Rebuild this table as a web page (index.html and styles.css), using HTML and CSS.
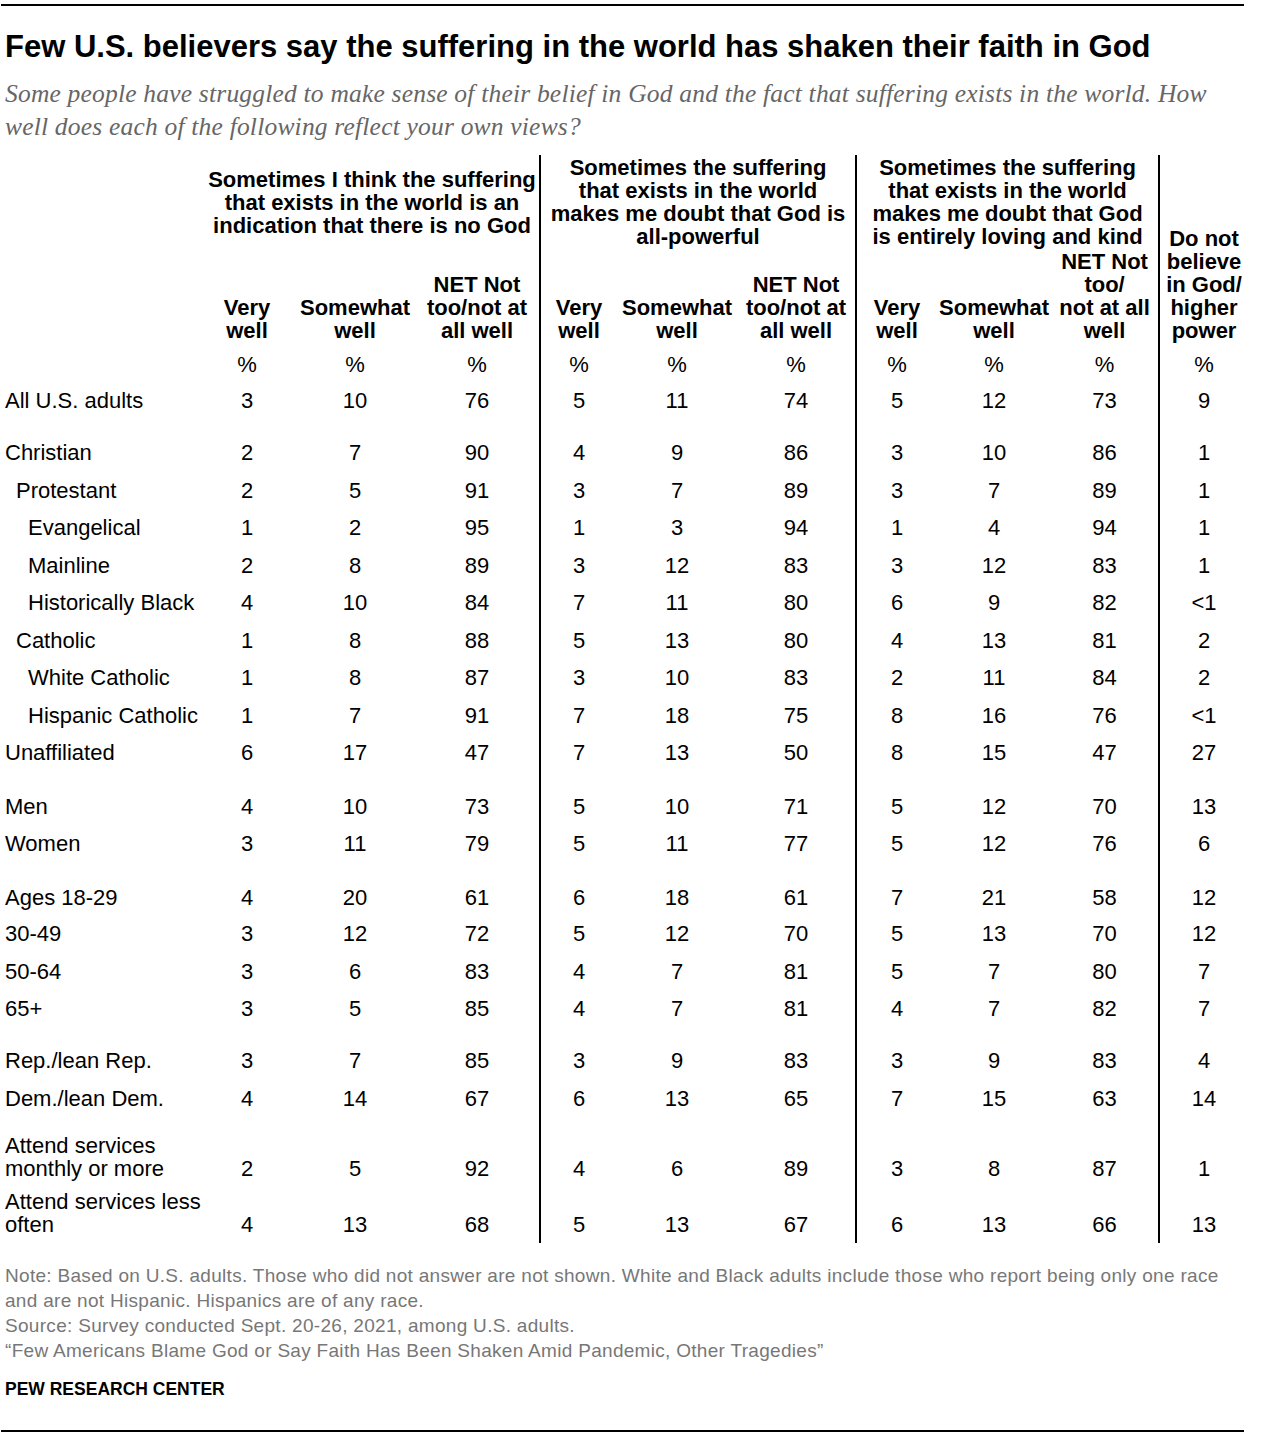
FILE: index.html
```html
<!DOCTYPE html>
<html lang="en">
<head>
<meta charset="utf-8">
<title>Few U.S. believers say the suffering in the world has shaken their faith in God</title>
<link rel="stylesheet" href="styles.css">
</head>
<body>
<div class="page">
  <div class="rule"></div>
  <h1 class="title">Few U.S. believers say the suffering in the world has shaken their faith in God</h1>
  <p class="subtitle">Some people have struggled to make sense of their belief in God and the fact that suffering exists in the world. How<br>well does each of the following reflect your own views?</p>

  <table class="data">
    <colgroup>
      <col class="w-label"><col class="w1"><col class="w2"><col class="w3">
      <col class="w4"><col class="w5"><col class="w6">
      <col class="w7"><col class="w8"><col class="w9">
      <col class="w10">
    </colgroup>
    <thead>
      <tr class="grp">
        <th></th>
        <th colspan="3" class="gh">Sometimes I think the suffering<br>that exists in the world is an<br>indication that there is no God</th>
        <th colspan="3" class="gh div">Sometimes the suffering<br>that exists in the world<br>makes me doubt that God is<br>all-powerful</th>
        <th colspan="3" class="gh div">Sometimes the suffering<br>that exists in the world<br>makes me doubt that God<br>is entirely loving and kind</th>
        <th rowspan="2" class="sh div last">Do not<br>believe<br>in God/<br>higher<br>power</th>
      </tr>
      <tr class="sub">
        <th></th>
        <th class="sh">Very<br>well</th>
        <th class="sh">Somewhat<br>well</th>
        <th class="sh c3">NET Not<br>too/not at<br>all well</th>
        <th class="sh div">Very<br>well</th>
        <th class="sh">Somewhat<br>well</th>
        <th class="sh">NET Not<br>too/not at<br>all well</th>
        <th class="sh div">Very<br>well</th>
        <th class="sh">Somewhat<br>well</th>
        <th class="sh">NET Not<br>too/<br>not at all<br>well</th>
      </tr>
      <tr class="pct">
        <td></td>
        <td>%</td><td>%</td><td class="c3">%</td>
        <td class="div">%</td><td>%</td><td>%</td>
        <td class="div">%</td><td>%</td><td>%</td>
        <td class="div">%</td>
      </tr>
    </thead>
    <tbody>
      <tr><td class="lbl">All U.S. adults</td><td>3</td><td>10</td><td class="c3">76</td><td class="div">5</td><td>11</td><td>74</td><td class="div">5</td><td>12</td><td>73</td><td class="div">9</td></tr>
      <tr class="gs"><td class="lbl">Christian</td><td>2</td><td>7</td><td class="c3">90</td><td class="div">4</td><td>9</td><td>86</td><td class="div">3</td><td>10</td><td>86</td><td class="div">1</td></tr>
      <tr><td class="lbl i1">Protestant</td><td>2</td><td>5</td><td class="c3">91</td><td class="div">3</td><td>7</td><td>89</td><td class="div">3</td><td>7</td><td>89</td><td class="div">1</td></tr>
      <tr><td class="lbl i2">Evangelical</td><td>1</td><td>2</td><td class="c3">95</td><td class="div">1</td><td>3</td><td>94</td><td class="div">1</td><td>4</td><td>94</td><td class="div">1</td></tr>
      <tr><td class="lbl i2">Mainline</td><td>2</td><td>8</td><td class="c3">89</td><td class="div">3</td><td>12</td><td>83</td><td class="div">3</td><td>12</td><td>83</td><td class="div">1</td></tr>
      <tr><td class="lbl i2">Historically Black</td><td>4</td><td>10</td><td class="c3">84</td><td class="div">7</td><td>11</td><td>80</td><td class="div">6</td><td>9</td><td>82</td><td class="div">&lt;1</td></tr>
      <tr><td class="lbl i1">Catholic</td><td>1</td><td>8</td><td class="c3">88</td><td class="div">5</td><td>13</td><td>80</td><td class="div">4</td><td>13</td><td>81</td><td class="div">2</td></tr>
      <tr><td class="lbl i2">White Catholic</td><td>1</td><td>8</td><td class="c3">87</td><td class="div">3</td><td>10</td><td>83</td><td class="div">2</td><td>11</td><td>84</td><td class="div">2</td></tr>
      <tr><td class="lbl i2">Hispanic Catholic</td><td>1</td><td>7</td><td class="c3">91</td><td class="div">7</td><td>18</td><td>75</td><td class="div">8</td><td>16</td><td>76</td><td class="div">&lt;1</td></tr>
      <tr><td class="lbl">Unaffiliated</td><td>6</td><td>17</td><td class="c3">47</td><td class="div">7</td><td>13</td><td>50</td><td class="div">8</td><td>15</td><td>47</td><td class="div">27</td></tr>
      <tr class="gs2"><td class="lbl">Men</td><td>4</td><td>10</td><td class="c3">73</td><td class="div">5</td><td>10</td><td>71</td><td class="div">5</td><td>12</td><td>70</td><td class="div">13</td></tr>
      <tr class="tight"><td class="lbl">Women</td><td>3</td><td>11</td><td class="c3">79</td><td class="div">5</td><td>11</td><td>77</td><td class="div">5</td><td>12</td><td>76</td><td class="div">6</td></tr>
      <tr class="gs2"><td class="lbl">Ages 18-29</td><td>4</td><td>20</td><td class="c3">61</td><td class="div">6</td><td>18</td><td>61</td><td class="div">7</td><td>21</td><td>58</td><td class="div">12</td></tr>
      <tr class="tight"><td class="lbl">30-49</td><td>3</td><td>12</td><td class="c3">72</td><td class="div">5</td><td>12</td><td>70</td><td class="div">5</td><td>13</td><td>70</td><td class="div">12</td></tr>
      <tr><td class="lbl">50-64</td><td>3</td><td>6</td><td class="c3">83</td><td class="div">4</td><td>7</td><td>81</td><td class="div">5</td><td>7</td><td>80</td><td class="div">7</td></tr>
      <tr><td class="lbl">65+</td><td>3</td><td>5</td><td class="c3">85</td><td class="div">4</td><td>7</td><td>81</td><td class="div">4</td><td>7</td><td>82</td><td class="div">7</td></tr>
      <tr class="gs"><td class="lbl">Rep./lean Rep.</td><td>3</td><td>7</td><td class="c3">85</td><td class="div">3</td><td>9</td><td>83</td><td class="div">3</td><td>9</td><td>83</td><td class="div">4</td></tr>
      <tr><td class="lbl">Dem./lean Dem.</td><td>4</td><td>14</td><td class="c3">67</td><td class="div">6</td><td>13</td><td>65</td><td class="div">7</td><td>15</td><td>63</td><td class="div">14</td></tr>
      <tr class="two first2"><td class="lbl">Attend services<br>monthly or more</td><td>2</td><td>5</td><td class="c3">92</td><td class="div">4</td><td>6</td><td>89</td><td class="div">3</td><td>8</td><td>87</td><td class="div">1</td></tr>
      <tr class="two last2"><td class="lbl">Attend services less<br>often</td><td>4</td><td>13</td><td class="c3">68</td><td class="div">5</td><td>13</td><td>67</td><td class="div">6</td><td>13</td><td>66</td><td class="div">13</td></tr>
    </tbody>
  </table>

  <div class="notes">
    <p>Note: Based on U.S. adults. Those who did not answer are not shown. White and Black adults include those who report being only one race<br>and are not Hispanic. Hispanics are of any race.</p>
    <p>Source: Survey conducted Sept. 20-26, 2021, among U.S. adults.</p>
    <p>“Few Americans Blame God or Say Faith Has Been Shaken Amid Pandemic, Other Tragedies”</p>
  </div>
  <div class="brand">PEW RESEARCH CENTER</div>
  <div class="rule bottom"></div>
</div>
</body>
</html>
```

FILE: styles.css
```css
html, body {
  margin: 0;
  padding: 0;
  background: #fff;
}
.page {
  width: 1244px;
  padding: 4px 0 0 0;
  font-family: "Liberation Sans", Arial, sans-serif;
  color: #000;
}
.rule {
  height: 2px;
  background: #000;
  margin-left: 1px;
}
.title {
  margin: 23px 0 0 5px;
  font-size: 31px;
  line-height: 36px;
  font-weight: bold;
  letter-spacing: 0;
  white-space: nowrap;
}
.subtitle {
  margin: 11.5px 0 0 5px;
  font-family: "Liberation Serif", "DejaVu Serif", serif;
  font-style: italic;
  font-size: 25.5px;
  line-height: 33px;
  letter-spacing: 0.2px;
  color: #666;
  white-space: nowrap;
}
.data {
  margin: 12.5px 0 0 5px;
  border-collapse: separate;
  border-spacing: 0;
  table-layout: fixed;
  width: 1243px;
  font-size: 22px;
}
.w-label { width: 200px; }
.w1 { width: 84px; }
.w2 { width: 132px; }
.w3 { width: 118px; }
.w4 { width: 78px; }
.w5 { width: 120px; }
.w6 { width: 118px; }
.w7 { width: 82px; }
.w8 { width: 114px; }
.w9 { width: 107px; }
.w10 { width: 90px; }
.data th, .data td {
  padding: 0;
  text-align: center;
  font-weight: normal;
  line-height: 23px;
  white-space: nowrap;
}
.data .div {
  border-left: 2px solid #000;
}
.data .c3 {
  padding-right: 6px;
}
.data .grp th {
  height: 94px;
  vertical-align: middle;
}
.data .gh {
  font-weight: bold;
  font-size: 22px;
}
.data th.sh,
.data .grp th.sh {
  font-weight: bold;
  font-size: 22px;
  vertical-align: bottom;
  padding-bottom: 1px;
}
.data .sub th {
  height: 93px;
}
.data .pct td {
  padding-top: 10px;
  padding-bottom: 6px;
}
.data tbody td {
  padding-top: 7px;
  padding-bottom: 7.5px;
}
.data tbody td.lbl {
  text-align: left;
}
.data tbody td.i1 { padding-left: 11px; }
.data tbody td.i2 { padding-left: 23px; }
.data tbody tr.gs td {
  padding-top: 21.5px;
}
.data tbody tr.gs2 td {
  padding-top: 23.5px;
}
.data tbody tr.tight td {
  padding-top: 6px;
}
.data tbody tr.two td {
  vertical-align: bottom;
}
.data tbody tr.first2 td {
  padding-top: 17px;
  padding-bottom: 3px;
}
.data tbody tr.last2 td {
  padding-top: 7px;
  padding-bottom: 7px;
}
.notes {
  margin: 19.5px 0 0 5px;
  color: #777;
  font-size: 19px;
  letter-spacing: 0.3px;
  line-height: 25px;
}
.notes p {
  margin: 0;
  white-space: nowrap;
}
.brand {
  margin: 14px 0 0 5px;
  font-weight: bold;
  font-size: 17.5px;
  line-height: 25px;
}
.rule.bottom {
  margin-top: 28.5px;
}
```
